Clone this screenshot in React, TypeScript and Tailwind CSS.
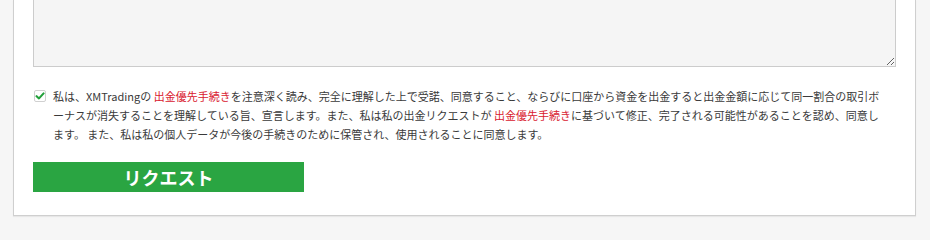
import React from "react";

export default function App() {
  const red = "text-[#d9202f]";
  return (
    <div className="w-[930px] h-[240px] bg-[#f6f6f6] overflow-hidden" style={{ fontFamily: '"Noto Sans CJK JP", "Noto Sans", sans-serif' }}>
      <div className="ml-[13px] w-[903px] h-[216px] bg-white border-x border-b border-[#cfcfcf] shadow-[0_1px_1px_rgba(0,0,0,0.06)] px-[19px] flex flex-col">
        <textarea
          readOnly
          className="block w-full h-[67px] bg-[#f5f5f5] border-x border-b border-t-0 border-[#cccccc] resize-y outline-none"
        />
        <div className="mt-[20px] flex items-start gap-[7px]">
          <div className="mt-[3px] ml-[1px] w-[12px] h-[12px] shrink-0 border border-[#d0d0d0] bg-white rounded-[2px] flex items-center justify-center">
            <svg width="10" height="10" viewBox="0 0 10 10">
              <path d="M1.6 5.2 L4 7.4 L8.6 2.4" fill="none" stroke="#22a03a" strokeWidth="2.1" strokeLinecap="round" strokeLinejoin="round" />
            </svg>
          </div>
          <div className="text-[11px] leading-[19px] text-[#3a3a3a] whitespace-nowrap">
            <div>
              私は、XMTradingの <span className={red}>出金優先手続き</span>を注意深く読み、完全に理解した上で受諾、同意すること、ならびに口座から資金を出金すると出金金額に応じて同一割合の取引ボ
            </div>
            <div>
              ーナスが消失することを理解している旨、宣言します。また、私は私の出金リクエストが <span className={red}>出金優先手続き</span>に基づいて修正、完了される可能性があることを認め、同意し
            </div>
            <div>ます。 また、私は私の個人データが今後の手続きのために保管され、使用されることに同意します。</div>
          </div>
        </div>
        <button className="mt-[18px] w-[271px] h-[30px] bg-[#2aa542] text-white text-[18px] font-bold leading-none flex items-center justify-center">
          リクエスト
        </button>
      </div>
    </div>
  );
}
